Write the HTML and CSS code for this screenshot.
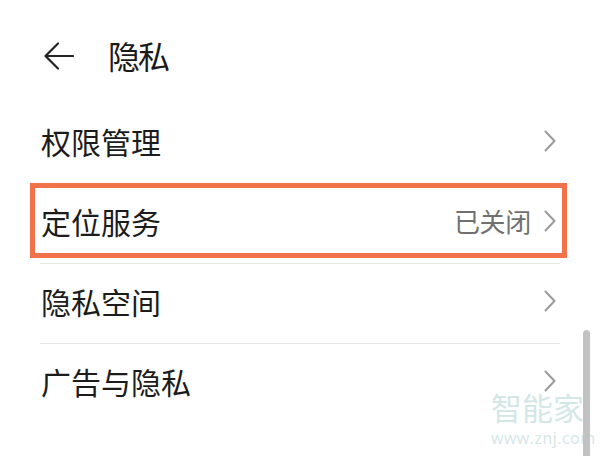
FILE: index.html
```html
<!DOCTYPE html>
<html lang="zh-CN">
<head>
<meta charset="utf-8">
<title>隐私</title>
<link rel="stylesheet" href="styles.css">
</head>
<body>
<div class="screen">
  <header class="header">
    <svg class="back" width="30" height="28" viewBox="0 0 30 28" aria-hidden="true">
      <path d="M29 14 H2 M14 1.5 L1.5 14 L14 26.5" fill="none" stroke="#222" stroke-width="2.2" stroke-linecap="round" stroke-linejoin="round"/>
    </svg>
    <h1 class="title">隐私</h1>
  </header>
  <ul class="list">
    <li class="row">
      <span class="label">权限管理</span>
      <span class="right"><svg class="chev" width="12" height="22" viewBox="0 0 12 22"><path d="M1.5 1.5 L10.5 11 L1.5 20.5" fill="none" stroke="#9a9a9a" stroke-width="2" stroke-linecap="round" stroke-linejoin="round"/></svg></span>
    </li>
    <li class="row highlighted">
      <span class="label">定位服务</span>
      <span class="right"><span class="value">已关闭</span><svg class="chev" width="12" height="22" viewBox="0 0 12 22"><path d="M1.5 1.5 L10.5 11 L1.5 20.5" fill="none" stroke="#9a9a9a" stroke-width="2" stroke-linecap="round" stroke-linejoin="round"/></svg></span>
      <span class="frame"></span>
    </li>
    <li class="row">
      <span class="label">隐私空间</span>
      <span class="right"><svg class="chev" width="12" height="22" viewBox="0 0 12 22"><path d="M1.5 1.5 L10.5 11 L1.5 20.5" fill="none" stroke="#9a9a9a" stroke-width="2" stroke-linecap="round" stroke-linejoin="round"/></svg></span>
    </li>
    <li class="row last">
      <span class="label">广告与隐私</span>
      <span class="right"><svg class="chev" width="12" height="22" viewBox="0 0 12 22"><path d="M1.5 1.5 L10.5 11 L1.5 20.5" fill="none" stroke="#9a9a9a" stroke-width="2" stroke-linecap="round" stroke-linejoin="round"/></svg></span>
    </li>
  </ul>
  <div class="watermark">
    <span class="wm-cn">智能家</span>
    <span class="wm-url">www.znj.com</span>
  </div>
  <div class="scrollbar"></div>
</div>
</body>
</html>
```
FILE: styles.css
```css
html, body {
  margin: 0;
  padding: 0;
  background: #ffffff;
}
body {
  font-family: "Noto Sans CJK SC", "Noto Sans", sans-serif;
  color: #1c1c1c;
}
.screen {
  position: relative;
  width: 600px;
  height: 456px;
  overflow: hidden;
  background: #fff;
}
.header {
  display: flex;
  align-items: center;
  height: 96px;
  padding: 8px 0 0 44px;
}
.back {
  display: block;
  flex: none;
}
.title {
  margin: 0 0 0 34px;
  padding-bottom: 3px;
  font-size: 32px;
  font-weight: 400;
  line-height: 1;
  letter-spacing: -2px;
  color: #1a1a1a;
}
.list {
  list-style: none;
  margin: 0 40px;
  padding: 0;
}
.row {
  position: relative;
  display: flex;
  align-items: center;
  justify-content: space-between;
  height: 74px;
  padding-bottom: 5px;
  border-bottom: 1px solid #e6e6e6;
}
.row.last {
  border-bottom: none;
}
.label {
  font-size: 30px;
  line-height: 1;
  padding-left: 1px;
  color: #1c1c1c;
}
.right {
  display: flex;
  align-items: center;
  gap: 13px;
  padding-right: 4px;
}
.value {
  font-size: 26px;
  line-height: 1;
  color: #707070;
  letter-spacing: -0.3px;
}
.chev {
  display: block;
}
.frame {
  position: absolute;
  left: -10px;
  right: -7px;
  top: -1px;
  height: 75px;
  border: 5px solid #f0714a;
  box-sizing: border-box;
  pointer-events: none;
}
.watermark {
  position: absolute;
  left: 491px;
  top: 391px;
  display: flex;
  flex-direction: column;
  align-items: flex-start;
  color: #d3e7e7;
  line-height: 1;
}
.wm-cn {
  font-size: 31px;
  line-height: 31px;
}
.wm-url {
  margin-top: 8px;
  font-family: "Open Sans", "Noto Sans", sans-serif;
  font-size: 16px;
  line-height: 16px;
  letter-spacing: 0.5px;
}
.scrollbar {
  position: absolute;
  left: 583px;
  top: 330px;
  width: 7px;
  height: 140px;
  border-radius: 4px;
  background: #c2c2c2;
}
```
